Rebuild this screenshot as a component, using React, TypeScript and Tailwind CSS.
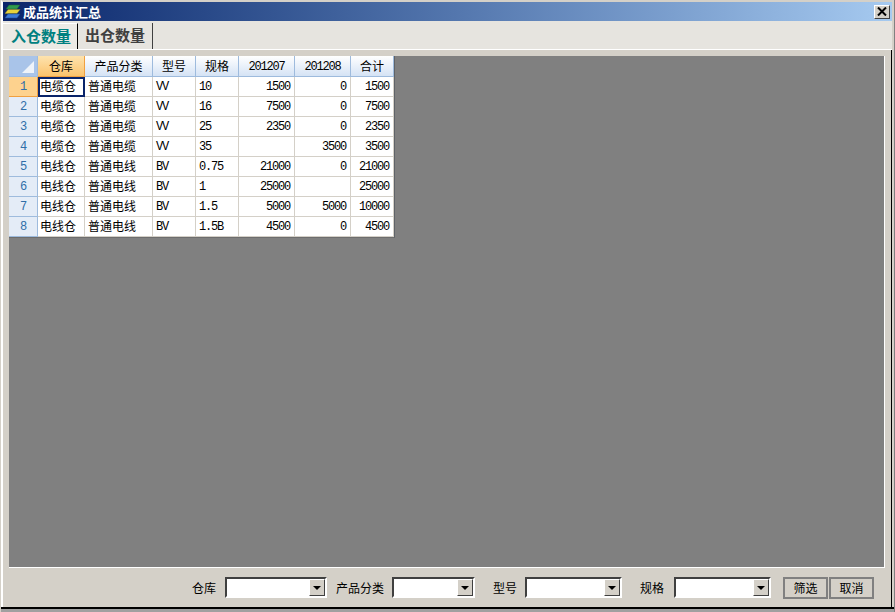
import React from "react";

const cols = [
  { label: "仓库", w: "w-[47px]", left: true, cjk: true },
  { label: "产品分类", w: "w-[68px]", left: true, cjk: true },
  { label: "型号", w: "w-[43px]", left: true, cjk: false },
  { label: "规格", w: "w-[43px]", left: true, cjk: false },
  { label: "201207", w: "w-[56px]", left: false, cjk: false },
  { label: "201208", w: "w-[56px]", left: false, cjk: false },
  { label: "合计", w: "w-[43px]", left: false, cjk: false },
];

const rows = [
  ["电缆仓", "普通电缆", "VV", "10", "1500", "0", "1500"],
  ["电缆仓", "普通电缆", "VV", "16", "7500", "0", "7500"],
  ["电缆仓", "普通电缆", "VV", "25", "2350", "0", "2350"],
  ["电缆仓", "普通电缆", "VV", "35", "", "3500", "3500"],
  ["电线仓", "普通电线", "BV", "0.75", "21000", "0", "21000"],
  ["电线仓", "普通电线", "BV", "1", "25000", "", "25000"],
  ["电线仓", "普通电线", "BV", "1.5", "5000", "5000", "10000"],
  ["电线仓", "普通电线", "BV", "1.5B", "4500", "0", "4500"],
];

const cjk = "font-['Noto_Sans_CJK_SC',sans-serif]";
const mono = "font-['Liberation_Mono',monospace] text-[12px] tracking-[-1.2px]";

const Combo = ({ w }: { w: string }) => (
  <div className={`${w} h-[21px] flex bg-white border-t-2 border-l-2 border-t-[#404040] border-l-[#404040] border-r-2 border-b-2 border-r-white border-b-white`}>
    <div className="flex-1" />
    <div className="w-[16px] h-[17px] bg-[#d4d0c8] border border-t-white border-l-white border-r-[#404040] border-b-[#404040] flex items-center justify-center">
      <div className="w-0 h-0 border-l-[4px] border-r-[4px] border-t-[4px] border-l-transparent border-r-transparent border-t-black" />
    </div>
  </div>
);

const Label = ({ text, cls }: { text: string; cls: string }) => (
  <span className={`${cls} text-[12px] text-black ${cjk}`}>{text}</span>
);

const App = () => {
  return (
    <div className={`w-[895px] h-[612px] overflow-hidden flex flex-col bg-[#d4d0c8] border-l border-r border-l-[#d4d0c8] border-r-[#808080] ${cjk}`}>
      <div className="flex-1 flex flex-col border-l-2 border-r-2 border-t-2 border-l-white border-r-[#d4d0c8] border-t-[#d4d0c8]">
        {/* title bar */}
        <div className="h-[19px] shrink-0 flex items-center bg-gradient-to-r from-[#0a246a] to-[#a6caf0] pl-[2px] pr-[2px]">
          <svg width="16" height="15" viewBox="0 0 16 15" className="shrink-0">
            <path d="M4 1 L15 1 L12 5 L1 5 Z" fill="#2f9a4e" stroke="#1c5f30" strokeWidth="0.5" />
            <path d="M3 5.5 L15 5.5 L12 9.5 L0 9.5 Z" fill="#e8d23c" stroke="#8f8420" strokeWidth="0.5" />
            <path d="M3 10 L15 10 L12 14 L0 14 Z" fill="#3d7bd8" stroke="#1f4a90" strokeWidth="0.5" />
          </svg>
          <span className="ml-[2px] text-[13px] font-bold text-white leading-none">成品统计汇总</span>
          <div className="ml-auto w-[16px] h-[14px] bg-[#d4d0c8] border border-t-white border-l-white border-r-[#404040] border-b-[#404040] flex items-center justify-center">
            <svg width="10" height="9" viewBox="0 0 10 9">
              <path d="M1 0.5 L9 8.5 M9 0.5 L1 8.5" stroke="#000" strokeWidth="2" fill="none" />
            </svg>
          </div>
        </div>

        {/* tabs */}
        <div className="h-[29px] shrink-0 flex bg-[#e6e4df] border-b border-b-white">
          <div className="w-[75px] mt-[2px] pl-[8px] bg-[#eceae5] border-t border-t-white border-r border-r-black text-[15px] font-bold text-[#008080] leading-[24px]">
            入仓数量
          </div>
          <div className="w-[75px] mt-[2px] pl-[7px] border-r border-r-[#404040] text-[15px] font-bold text-[#404040] leading-[24px]">
            出仓数量
          </div>
        </div>

        {/* main area */}
        <div className="flex-1 flex flex-col pl-[6px] pr-[6px] pt-[6px] border-r border-r-black">
          <div className="flex-1 bg-[#808080] border-r border-b border-r-white border-b-white">
            <div className="w-fit bg-white border-r border-b border-r-[#5f6368] border-b-[#6d6d6d]">
              <div className="flex h-[21px]">
                <div className="w-[29px] bg-[#a9c4e9] border-r border-b border-r-[#9ebbdd] border-b-[#9ebbdd] flex items-end justify-end p-[3px]">
                  <div className="w-0 h-0 border-l-[12px] border-b-[12px] border-l-transparent border-b-[#eef3fa]" />
                </div>
                {cols.map((c, i) => (
                  <div
                    key={c.label}
                    className={`${c.w} flex items-center justify-center text-[12px] text-black border-r border-b ${
                      i === 0
                        ? "bg-gradient-to-b from-[#fde3ae] to-[#fbc36c] border-r-[#f0a040] border-b-[#f0a040]"
                        : "bg-gradient-to-b from-[#ffffff] to-[#d5e3f5] border-r-[#9ebbdd] border-b-[#9ebbdd]"
                    }`}
                  >
                    <span className={/\d/.test(c.label) ? `${mono} pt-[1px]` : "pb-[1px]"}>{c.label}</span>
                  </div>
                ))}
              </div>
              {rows.map((row, r) => (
                <div key={r} className="flex h-[20px]">
                  <div
                    className={`w-[29px] flex items-center justify-center border-r border-b ${mono} text-[#2f6ea8] ${
                      r === 0 ? "bg-[#fdd28e] border-r-[#f0a040] border-b-[#f0a040]" : "bg-[#e4ecf7] border-r-[#9ebbdd] border-b-[#9ebbdd]"
                    }`}
                  >
                    {r + 1}
                  </div>
                  {row.map((val, i) => (
                    <div
                      key={i}
                      className={`${cols[i].w} flex items-center text-black ${
                        r === 0 && i === 0 ? "border-2 border-[#0a246a]" : "border-r border-b border-r-[#d4d0c8] border-b-[#d4d0c8]"
                      } ${cols[i].left ? (i === 0 ? (r === 0 ? "pl-0" : "pl-[2px]") : "pl-[3px]") : "justify-end pr-[4px]"} ${
                        cols[i].cjk ? "text-[12px] pb-[2px]" : mono
                      }`}
                    >
                      {val}
                    </div>
                  ))}
                </div>
              ))}
            </div>
          </div>

          {/* filter bar */}
          <div className="h-[39px] shrink-0 flex items-center justify-end pr-[11px]">
            <Label text="仓库" cls="mr-[9px]" />
            <Combo w="w-[102px]" />
            <Label text="产品分类" cls="ml-[9px] mr-[8px]" />
            <Combo w="w-[83px]" />
            <Label text="型号" cls="ml-[18px] mr-[8px]" />
            <Combo w="w-[97px]" />
            <Label text="规格" cls="ml-[18px] mr-[10px]" />
            <Combo w="w-[97px]" />
            <button className="ml-[12px] w-[45px] h-[22px] border-2 border-[#808080] text-[12px] text-black leading-none">筛选</button>
            <button className="ml-[1px] w-[45px] h-[22px] border-2 border-[#808080] text-[12px] text-black leading-none">取消</button>
          </div>
        </div>
      </div>
      <div className="h-[2px] shrink-0 bg-[#000]" />
      <div className="h-[3px] shrink-0 bg-[#a0a0a0]" />
    </div>
  );
};

export default App;
